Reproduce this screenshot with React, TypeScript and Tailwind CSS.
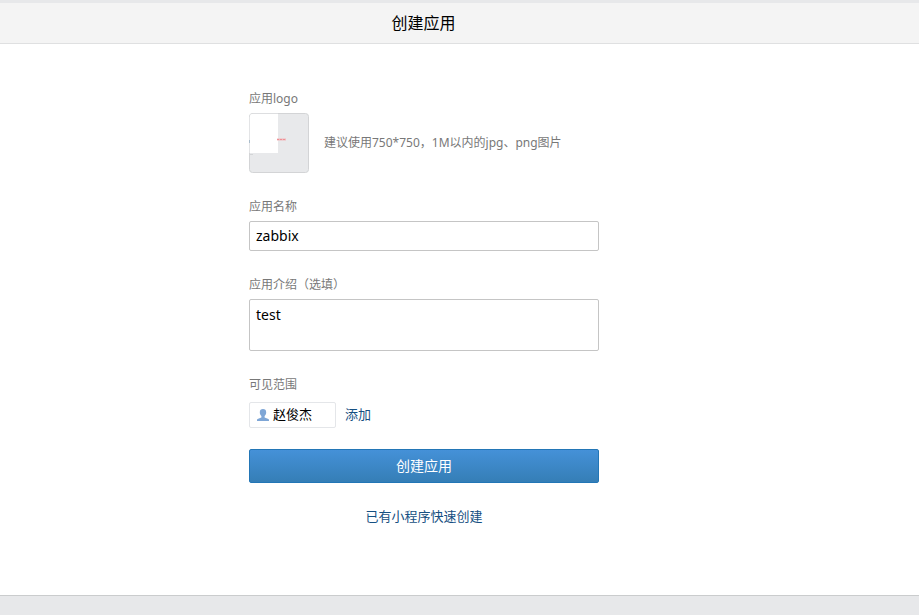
import { useState, type ReactNode } from "react";

function Field({ label, htmlFor, children }: { label: string; htmlFor: string; children: ReactNode }) {
  return (
    <div className="flex flex-col gap-[5px]">
      <label htmlFor={htmlFor} className="text-xs leading-[18px] text-[#787878]">
        {label}
      </label>
      {children}
    </div>
  );
}

function LogoPreview() {
  return (
    <svg viewBox="0 0 60 60" className="size-full" aria-hidden="true">
      <rect x=".5" y=".5" width="59" height="59" rx="3" fill="#e8e9eb" stroke="#d3d4d6" />
      <path d="M1 3q0-2 2-2h26v39H1z" fill="#fff" />
      <path d="M.5 4v36" stroke="#e3e4e6" />
      <path d="M4 .5h25" stroke="#dddee0" />
      <path d="M.5 27v3" stroke="#a9bccb" />
      <path d="M1 41.500h3" stroke="#d3d5d7" />
      <path d="M28 26.500h9" stroke="#f1b9bc" strokeWidth="2" />
      <path d="M28 26.500h9" stroke="#ee8f94" strokeDasharray="2 1" />
    </svg>
  );
}

function PersonIcon() {
  return (
    <svg viewBox="0 0 12 12" className="size-3 shrink-0" fill="#7ea6d6" aria-hidden="true">
      <path d="M6 0C4 0 2.800 1.200 2.800 3.200c0 1.700.7 3 1.600 3.800v1.500L1.200 9.700C.3 10 0 10.500 0 11.300V12h12v-.7c0-.8-.3-1.300-1.200-1.600L7.600 8.500V7c.9-.8 1.600-2.100 1.600-3.800C9.200 1.200 8 0 6 0z" />
    </svg>
  );
}

export default function App() {
  const [name, setName] = useState("zabbix");
  const [intro, setIntro] = useState("test");

  return (
    <div className="flex min-h-screen flex-col bg-[#e7e8ea] pt-[3px] font-['Noto_Sans','Noto_Sans_CJK_SC',sans-serif] text-black">
      <header className="border-b border-[#dfe0e1] bg-[#f4f4f4] pr-[72px]">
        <h1 className="text-center text-base leading-10">创建应用</h1>
      </header>

      <main className="grow border-b border-[#cacccd] bg-white pt-[46px] pr-[71px] pb-8">
        <form className="mx-auto w-full max-w-[350px]" onSubmit={(e) => e.preventDefault()}>
          <div className="flex flex-col gap-[25px]">
            <Field label="应用logo" htmlFor="logo">
              <div className="flex items-center gap-[15px]">
                <button id="logo" type="button" aria-label="应用logo" className="size-[60px] shrink-0">
                  <LogoPreview />
                </button>
                <p className="text-xs whitespace-nowrap text-[#787878]">建议使用750*750，1M以内的jpg、png图片</p>
              </div>
            </Field>

            <Field label="应用名称" htmlFor="name">
              <input
                id="name"
                type="text"
                value={name}
                onChange={(e) => setName(e.target.value)}
                className="h-[30px] w-full rounded-xs border border-[#c5c5c5] bg-white px-1.5 pb-0.5 text-sm"
              />
            </Field>

            <Field label="应用介绍（选填）" htmlFor="intro">
              <textarea
                id="intro"
                value={intro}
                onChange={(e) => setIntro(e.target.value)}
                className="block h-[52px] w-full resize-none rounded-xs border border-[#c5c5c5] bg-white px-1.5 py-[5px] text-sm"
              />
            </Field>

            <div className="flex flex-col gap-2">
              <h2 className="text-xs leading-[18px] text-[#787878]">可见范围</h2>
              <div className="flex items-center gap-[9px] text-[13px]">
                <span className="flex h-[26px] w-[87px] items-center gap-1 rounded-xs border border-[#e4e6e9] px-[7px]">
                  <PersonIcon />
                  赵俊杰
                </span>
                <a href="#add" className="text-[#165082]">
                  添加
                </a>
              </div>
            </div>
          </div>

          <button
            type="submit"
            className="mt-[21px] block h-[34px] w-full rounded-xs border border-[#2376b6] bg-linear-to-b from-[#4591d8] to-[#357eb6] text-sm text-white"
          >
            创建应用
          </button>

          <div className="mt-[23px] text-center text-[13px] leading-5">
            <a href="#quick" className="text-[#165082]">
              已有小程序快速创建
            </a>
          </div>
        </form>
      </main>

      <footer className="h-[19px]" />
    </div>
  );
}
